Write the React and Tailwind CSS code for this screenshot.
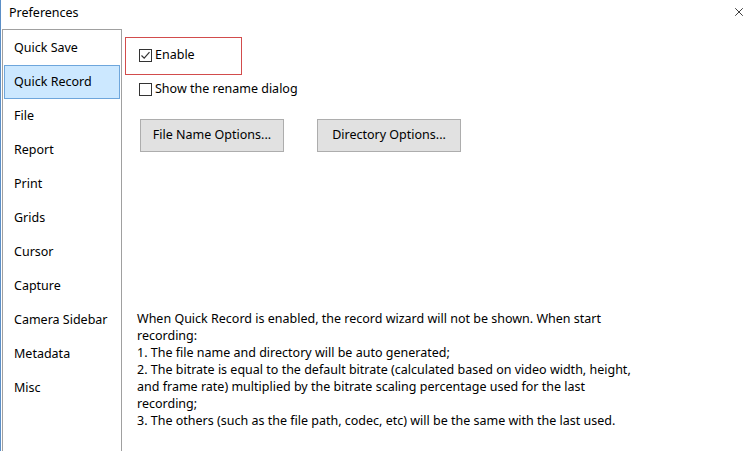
import { X } from 'lucide-react'

const items = [
  'Quick Save',
  'Quick Record',
  'File',
  'Report',
  'Print',
  'Grids',
  'Cursor',
  'Capture',
  'Camera Sidebar',
  'Metadata',
  'Misc',
]

function Checkbox({ checked, label }) {
  return (
    <label className="flex h-[17px] items-center gap-[3px]">
      <span className="grid size-[13px] place-items-center border border-[#333] bg-white">
        {checked && (
          <svg width="11" height="11" viewBox="0 0 11 11" fill="none">
            <path d="M1.5 5.5 L4.2 8.2 L9.5 2.2" stroke="#333" strokeWidth="1.2" />
          </svg>
        )}
      </span>
      <span>{label}</span>
    </label>
  )
}

export default function App() {
  return (
    <div
      className="relative h-[451px] w-[756px] overflow-hidden border-l border-[#5b8fc7] bg-white text-[12.5px] text-black"
      style={{ fontFamily: '"Noto Sans", "Open Sans", sans-serif' }}
    >
      <div className="flex h-[29px] items-start justify-between pl-[8px] pr-[10px] pt-[4px]">
        <span>Preferences</span>
        <X className="mt-[1px] size-[14px] text-black" strokeWidth={1.3} />
      </div>

      <div className="flex h-[422px]">
        <aside className="ml-[1px] w-[120px] border border-b-0 border-[#a0a0a0] px-[1px] pt-[1px]">
          {items.map((item) => (
            <div
              key={item}
              className={
                item === 'Quick Record'
                  ? 'flex h-[34px] items-center border border-[#6ea6dc] bg-[#cce8ff] pl-[9px]'
                  : 'flex h-[34px] items-center border border-transparent pl-[9px]'
              }
            >
              {item}
            </div>
          ))}
        </aside>

        <main className="relative flex-1 pl-[17px] pt-[18px]">
          <div className="pointer-events-none absolute left-[3px] top-[8px] h-[38px] w-[117px] border border-[#d24c4c]" />
          <div className="flex flex-col gap-[17px]">
            <Checkbox checked label="Enable" />
            <Checkbox label="Show the rename dialog" />
          </div>

          <div className="mt-[21px] flex gap-[33px] pl-[1px]">
            <button className="h-[33px] w-[144px] border border-[#adadad] bg-[#e1e1e1]">File Name Options...</button>
            <button className="h-[33px] w-[144px] border border-[#adadad] bg-[#e1e1e1]">Directory Options...</button>
          </div>

          <p className="mt-[158px] w-[500px] -ml-[2px] leading-[17px]">
            When Quick Record is enabled, the record wizard will not be shown. When start recording:
            <br />
            1. The file name and directory will be auto generated;
            <br />
            2. The bitrate is equal to the default bitrate (calculated based on video width, height, and frame rate)
            multiplied by the bitrate scaling percentage used for the last recording;
            <br />
            3. The others (such as the file path, codec, etc) will be the same with the last used.
          </p>
        </main>
      </div>
    </div>
  )
}
